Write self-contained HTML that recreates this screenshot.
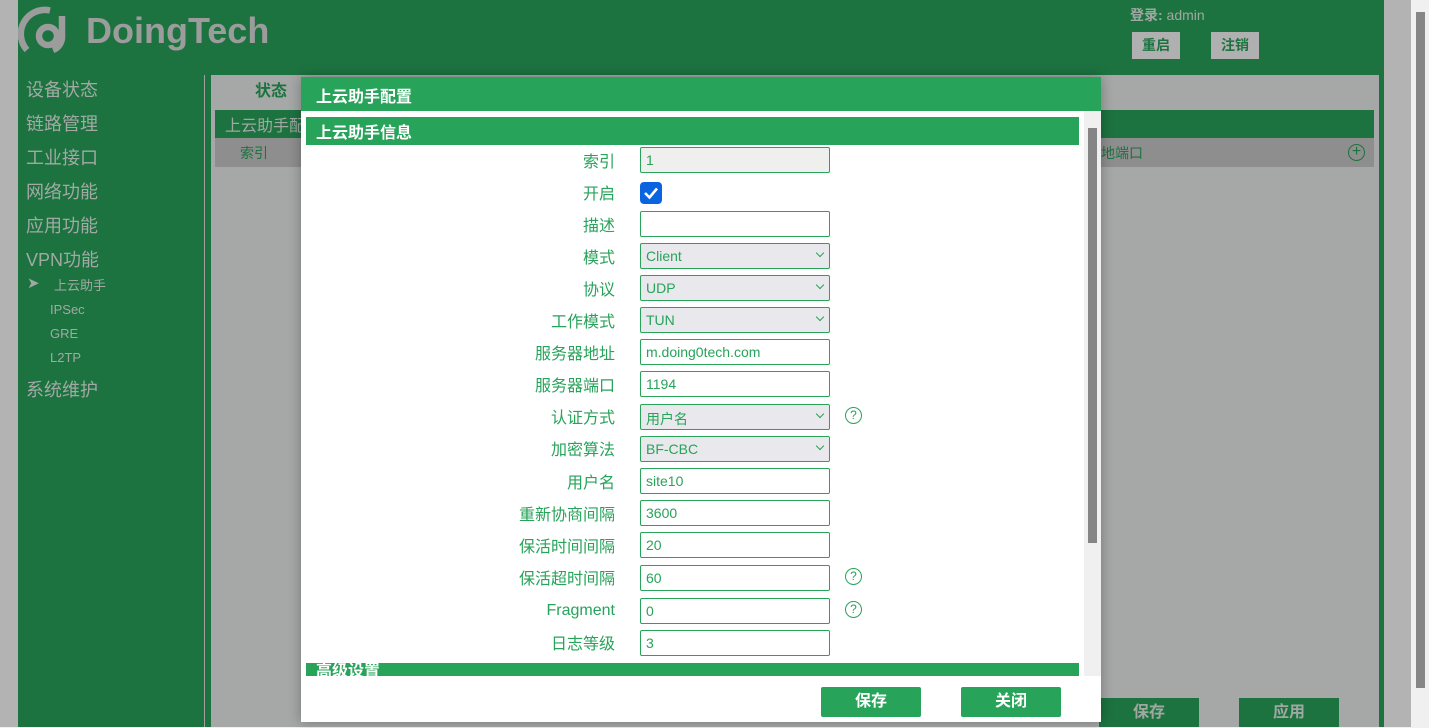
<!DOCTYPE html>
<html><head><meta charset="utf-8"><style>
*{margin:0;padding:0;box-sizing:border-box}
body{width:1429px;height:727px;overflow:hidden;background:#f0f0f0;font-family:"Liberation Sans","Noto Sans CJK SC",sans-serif;position:relative}
.a{position:absolute}
.side{font-size:18px;color:#a2a9a4;left:26px}
.sub{font-size:13px;color:#a2a9a4;left:50px}
.lbl{position:absolute;right:814px;font-size:16px;color:#27a35a;text-align:right;white-space:nowrap}
.in{position:absolute;left:640px;width:190px;height:26px;border:1.5px solid #27a35a;border-radius:2px;background:#fff;font-size:14px;color:#27a35a;padding:4px 0 0 5px}
.sel{background:#e9e9ed}
.sel:after{content:"";position:absolute;right:6px;top:6px;width:5px;height:5px;border-right:1.6px solid #27a35a;border-bottom:1.6px solid #27a35a;transform:rotate(45deg)}
.q{position:absolute;left:845px;width:17px;height:17px;border:1.5px solid #27a35a;border-radius:50%;color:#27a35a;font-size:12px;text-align:center;line-height:14px}
.btn{position:absolute;height:30px;background:#27a35a;color:#fff;font-size:16px;font-weight:bold;text-align:center;line-height:30px;border-radius:2px}
</style></head><body>
<div class="a" style="left:0;top:0;width:18px;height:727px;background:#b3b3b3"></div>
<div class="a" style="left:18px;top:0;width:1366px;height:727px;background:#1c7340"></div>
<div class="a" style="left:1384px;top:0;width:27px;height:727px;background:#b3b3b3"></div>
<div class="a" style="left:1416px;top:12px;width:9px;height:676px;background:#868686"></div>
<!-- logo -->
<svg class="a" style="left:18px;top:4px" width="56" height="54" viewBox="0 0 56 54"><path d="M32 6.5 A24 24 0 0 0 9 46" fill="none" stroke="#9c9c9c" stroke-width="6.5"/><circle cx="30" cy="32" r="9" fill="none" stroke="#9c9c9c" stroke-width="6.5"/><path d="M44 12 V32 A14 14 0 0 1 35 46" fill="none" stroke="#9c9c9c" stroke-width="6.5"/></svg>
<div class="a" style="left:86px;top:10px;font-size:36px;font-weight:bold;color:#9c9c9c">DoingTech</div>
<div class="a" style="left:1130px;top:5px;font-size:14px;color:#a0a8a2"><b>登录:</b> admin</div>
<div class="a" style="left:1132px;top:32px;width:48px;height:27px;background:#b0b0b0;color:#1c7340;font-size:14px;font-weight:bold;text-align:center;line-height:27px">重启</div>
<div class="a" style="left:1211px;top:32px;width:48px;height:27px;background:#b0b0b0;color:#1c7340;font-size:14px;font-weight:bold;text-align:center;line-height:27px">注销</div>
<!-- sidebar -->
<div class="a side" style="top:76px">设备状态</div>
<div class="a side" style="top:110px">链路管理</div>
<div class="a side" style="top:144px">工业接口</div>
<div class="a side" style="top:178px">网络功能</div>
<div class="a side" style="top:212px">应用功能</div>
<div class="a side" style="top:246px">VPN功能</div>
<div class="a" style="left:27px;top:274px;font-size:15px;color:#a2a9a4">➤</div>
<div class="a sub" style="left:54px;top:275px">上云助手</div>
<div class="a sub" style="top:302px">IPSec</div>
<div class="a sub" style="top:326px">GRE</div>
<div class="a sub" style="top:350px">L2TP</div>
<div class="a side" style="top:376px">系统维护</div>
<div class="a" style="left:204px;top:75px;width:1px;height:652px;background:#a0a0a0"></div>
<!-- content panel -->
<div class="a" style="left:211px;top:75px;width:1168px;height:652px;background:#a6a8a7"></div>
<div class="a" style="left:255px;top:77px;font-size:16px;font-weight:bold;color:#1c7340">状态</div>
<div class="a" style="left:215px;top:110px;width:1159px;height:28px;background:#1c7340"></div>
<div class="a" style="left:225px;top:112px;font-size:16px;color:#a0a8a2">上云助手配</div>
<div class="a" style="left:215px;top:138px;width:1159px;height:29px;background:#8e8e8e"></div>
<div class="a" style="left:240px;top:143px;font-size:14px;color:#1c7340">索引</div>
<div class="a" style="left:1101px;top:143px;font-size:14px;color:#1c7340">地端口</div>
<div class="a" style="left:1348px;top:144px;width:17px;height:17px;border:1.5px solid #1c7340;border-radius:50%;color:#1c7340;font-size:16px;line-height:13px;text-align:center">+</div>
<div class="a" style="left:1099px;top:698px;width:100px;height:29px;background:#1c7340;color:#a0a8a2;font-size:16px;font-weight:bold;text-align:center;line-height:30px">保存</div>
<div class="a" style="left:1239px;top:698px;width:100px;height:29px;background:#1c7340;color:#a0a8a2;font-size:16px;font-weight:bold;text-align:center;line-height:30px">应用</div>
<!-- modal -->
<div class="a" style="left:301px;top:77px;width:800px;height:645px;background:#fff;box-shadow:0 0 12px rgba(0,0,0,.3)"></div>
<div class="a" style="left:301px;top:77px;width:800px;height:34px;background:#27a35a;color:#fff;font-size:16px;font-weight:bold;padding:6px 0 0 15px">上云助手配置</div>
<div class="a" style="left:1084px;top:111px;width:17px;height:565px;background:#f0f0f0"></div>
<div class="a" style="left:1088px;top:128px;width:9px;height:415px;background:#858585"></div>
<div class="a" style="left:306px;top:117px;width:773px;height:28px;background:#27a35a;color:#fff;font-size:16px;font-weight:bold;padding:2px 0 0 10px">上云助手信息</div>
<div class="lbl" style="top:148px">索引</div><div class="in" style="top:147px;background:#eff0ee">1</div>
<div class="lbl" style="top:180px">开启</div>
<div class="a" style="left:640px;top:182px;width:22px;height:22px;background:#0a64e0;border-radius:4px"><svg width="22" height="22"><path d="M5 11 L9.5 15.5 L17 6.5" fill="none" stroke="#fff" stroke-width="2.6"/></svg></div>
<div class="lbl" style="top:212px">描述</div><div class="in" style="top:211px"></div>
<div class="lbl" style="top:244px">模式</div><div class="in sel" style="top:243px">Client</div>
<div class="lbl" style="top:276px">协议</div><div class="in sel" style="top:275px">UDP</div>
<div class="lbl" style="top:308px">工作模式</div><div class="in sel" style="top:307px">TUN</div>
<div class="lbl" style="top:340px">服务器地址</div><div class="in" style="top:339px">m.doing0tech.com</div>
<div class="lbl" style="top:372px">服务器端口</div><div class="in" style="top:371px">1194</div>
<div class="lbl" style="top:404px">认证方式</div><div class="in sel" style="top:404px">用户名</div><div class="q" style="top:407px">?</div>
<div class="lbl" style="top:436px">加密算法</div><div class="in sel" style="top:436px">BF-CBC</div>
<div class="lbl" style="top:469px">用户名</div><div class="in" style="top:468px">site10</div>
<div class="lbl" style="top:501px">重新协商间隔</div><div class="in" style="top:500px">3600</div>
<div class="lbl" style="top:533px">保活时间间隔</div><div class="in" style="top:532px">20</div>
<div class="lbl" style="top:565px">保活超时间隔</div><div class="in" style="top:565px">60</div><div class="q" style="top:568px">?</div>
<div class="lbl" style="top:602px">Fragment</div><div class="in" style="top:598px">0</div><div class="q" style="top:601px">?</div>
<div class="lbl" style="top:630px">日志等级</div><div class="in" style="top:630px">3</div>
<div class="a" style="left:306px;top:663px;width:773px;height:13px;background:#27a35a;overflow:hidden;color:#fff;font-size:16px;font-weight:bold;padding:1px 0 0 10px;line-height:16px">高级设置</div>
<div class="a" style="left:301px;top:676px;width:800px;height:46px;background:#fff"></div>
<div class="btn" style="left:821px;top:687px;width:100px">保存</div>
<div class="btn" style="left:961px;top:687px;width:100px">关闭</div>
</body></html>
